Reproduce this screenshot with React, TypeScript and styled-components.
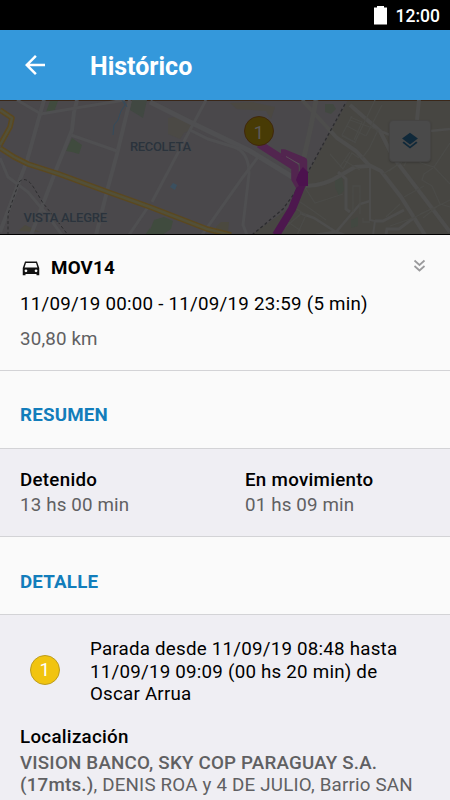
import React from 'react';
import styled, { createGlobalStyle } from 'styled-components';

const GlobalStyle = createGlobalStyle`
  * { box-sizing: border-box; }
  html, body { margin: 0; padding: 0; overflow: hidden; background: #fafafa; }
`;

const Screen = styled.div`
  width: 450px;
  height: 800px;
  overflow: hidden;
  display: flex;
  flex-direction: column;
  font-family: Roboto, "Liberation Sans", sans-serif;
  font-size: 18.75px;
  letter-spacing: 0.22px;
  color: #000;
  background: #fafafa;
`;

const StatusBar = styled.div`
  flex: 0 0 30px;
  display: flex;
  justify-content: flex-end;
  align-items: center;
  gap: 9px;
  padding: 2px 10px 0 0;
  background: #000;
  color: #fff;
  font-size: 17.5px;
  font-weight: 500;
  letter-spacing: 0;
  line-height: 28px;
`;

const BatteryIcon = styled.svg`
  margin-top: -2px;
`;

const AppBar = styled.header`
  flex: 0 0 70px;
  display: flex;
  align-items: center;
  gap: 40px;
  padding: 0 20px;
  background: #3498db;
  color: #fff;
`;

const BackIcon = styled.svg`
  width: 30px;
  height: 30px;
`;

const Title = styled.h1`
  margin: 3px 0 0;
  font-size: 25px;
  font-weight: 700;
  letter-spacing: 0;
  line-height: 30px;
`;

const MapArea = styled.div`
  flex: 0 0 135px;
  position: relative;
  background: #474642;
  border-bottom: 1px solid #000;
  overflow: hidden;
`;

const MapDrawing = styled.svg`
  display: block;
`;

const LayersButton = styled.button`
  position: absolute;
  left: 389px;
  top: 20px;
  width: 42px;
  height: 42px;
  padding: 0;
  display: grid;
  place-items: center;
  border: 1px solid #454443;
  border-radius: 4px;
  background: #4a4a4a;
  box-shadow: 0 1px 2px rgba(0, 0, 0, 0.18);
`;

const Summary = styled.section`
  flex: 0 0 136px;
  padding: 22px 20px 0;
  border-bottom: 1px solid #d3d3d6;
`;

const VehicleRow = styled.div`
  display: flex;
  align-items: center;
  height: 22px;
`;

const CarIcon = styled.svg`
  width: 22px;
  height: 22px;
  margin-right: 9px;
`;

const VehicleName = styled.span`
  font-weight: 700;
  line-height: 22px;
`;

const Chevrons = styled.svg`
  margin: -6px 4px 0 auto;
`;

const Period = styled.div`
  margin-top: 13px;
  letter-spacing: 0.235px;
  line-height: 24px;
`;

const Muted = styled.div<{ $top?: number }>`
  margin-top: ${(p) => p.$top ?? 0}px;
  color: #606062;
  letter-spacing: 0.15px;
  line-height: 24px;
`;

const SectionHeading = styled.h2<{ $top: number }>`
  flex: 0 0 78px;
  display: flex;
  align-items: center;
  margin: 0;
  padding: ${(p) => p.$top}px 20px 0;
  border-bottom: 1px solid #d3d3d6;
  color: #127dbb;
  font-size: 18.75px;
  font-weight: 700;
  letter-spacing: 0.18px;
`;

const Stats = styled.section`
  flex: 0 0 88px;
  display: grid;
  grid-template-columns: 1fr 1fr;
  padding-top: 19px;
  background: #efeef3;
  border-bottom: 1px solid #d3d3d6;
`;

const Stat = styled.div`
  padding-left: 20px;
`;

const Label = styled.div`
  font-weight: 500;
  letter-spacing: 0.28px;
  line-height: 25px;
`;

const Detail = styled.section`
  flex: 1 0 auto;
  padding: 23px 20px 0;
  background: #efeef3;
`;

const Stop = styled.div`
  display: flex;
  align-items: center;
  padding-left: 10px;
  gap: 30px;
`;

const StopBadge = styled.div`
  flex: 0 0 30px;
  height: 30px;
  border: 1px solid #bd9d1e;
  border-radius: 50%;
  display: grid;
  place-items: center;
  background: #f1c40f;
  color: #fff;
  line-height: 29px;
  margin-top: -3px;
`;

const StopText = styled.div`
  line-height: 22.5px;
`;

const Place = styled.div`
  margin-top: 19px;
`;

const Address = styled.p`
  margin: 2px 0 0;
  width: 430px;
  color: #606062;
  letter-spacing: 0.2px;
  line-height: 22.5px;
`;

const Strong = styled.strong`
  font-weight: 500;
`;

function CityMap() {
  return (
    <MapDrawing width="450" height="135" viewBox="0 0 450 135" fill="none">
      <path d="M0 0H348L302 84L292 106L251 135H0Z" fill="#4a484b" />
      <path d="M0 0H450" stroke="#3a2719" strokeWidth="2" />
      <g fill="#404b3e">
        <path d="M50 1h8l-4 11h-8z" />
        <path d="M72 38l10 7-3 9-7-2-6-1z" />
        <path d="M132 0h15l-4 18-13-8z" fill="#414842" />
        <path d="M150 130l4-10 10-3 9 4-2 8-9 6h-12z" />
        <path d="M145 135l5-7v7z" />
      </g>
      <g fill="#4b493f">
        <path d="M168 18l12-2 9 6 4 7-9 4-4 6-12-5z" opacity=".5" />
        <path d="M230 3l7 6 29 2 5 8 4-12-23-5z" opacity=".7" />
        <path d="M216 127l5-5h8l-1 9h-12z" />
        <path d="M18 131l7-6 15 7z" />
      </g>
      <g fill="#424841">
        <path d="M325 4h8l3 5-5 5-6-2z" />
        <path d="M335 78h7l2 12-5 6-4-9z" />
        <path d="M351 120l7-3v9l-7 2z" />
      </g>
      <path d="M170 87l3-4 4 2-2 5z" fill="#3b5060" />

      <g stroke="#4f4f51" strokeWidth="4">
        <path d="M44 0L40 14L27 61L0 132" />
        <path d="M77 0L74 12L72 30L56 70L31 135" />
        <path d="M130 0L117 54L107 91L96 135" />
        <path d="M17 0L41 14L76 8L125 0" strokeWidth="3" />
        <path d="M71 35L117 51" strokeWidth="3" />
        <path d="M0 58L8 77L28 92L48 116L62 135" strokeWidth="3" />
        <path d="M148 107L129 135" strokeWidth="3" />
        <path d="M150 2L194 24L250 51L294 78" strokeWidth="5" />
        <path d="M206 0L190 30L152 102" strokeWidth="3" />
        <path d="M190 30L208 39L234 47Q249 52 249 74L243 125L247 135" strokeWidth="3" />
        <path d="M258 57L243 77L202 135" strokeWidth="3" />
      </g>

      <g stroke="#4d4d4c" strokeWidth="4">
        <path d="M302 0L337 38L356 51L369 65L381 71L401 97L425 135" />
        <path d="M316 0L311 26L300 75" strokeWidth="5" />
        <path d="M306 86Q324 86 341 75L355 67L369 66" />
        <path d="M350 5L380 31L393 57L422 95L450 132" />
        <path d="M380 31L390 35L450 29" strokeWidth="2.5" />
        <path d="M300 113L314 118L336 132L360 104L370 101" strokeWidth="2.5" />
        <path d="M370 65L370 120L375 121L373 135" strokeWidth="2" />
        <path d="M336 132L316 135M336 132L344 135" strokeWidth="3" />
        <path d="M338 72L346 79L346 109L350 112" strokeWidth="3" />
        <path d="M375 121L383 121L404 110M386 135L387 129L399 129L415 117" strokeWidth="3" />
        <path d="M419 0L417 20" />
      </g>

      <g stroke="#4b4b48" strokeWidth="1.3">
        <path d="M352 16L342 35L355 42L375 0M350 17L362 22L354 40M347 26L366 36M350 20L367 26L378 30L369 49L362 58" />
        <path d="M366 36L382 5M342 36L356 43M340 67L350 52M345 61L360 70M330 54L343 69L352 53L359 58" />
        <path d="M353 112V86H360V114M363 118V122H370M300 102L312 110L326 120M300 80L315 103L343 94" />
        <path d="M383 74L402 62M389 71L397 65M404 66L412 50M412 55L421 63L434 67L450 43M434 67L450 84" />
        <path d="M433 68L424 74L422 80L432 86L440 104L450 107M440 105L420 114M404 97L424 86M400 104L386 117M423 118L439 105M390 126L413 118L450 100" />
        <path d="M287 124L295 108L306 115L297 135M282 130L302 113M288 122L301 131" />
      </g>

      <g strokeLinejoin="round">
        <path d="M0 10L12 18L10 27L0 45M0 48L14 57L28 64L59 74L108 92L150 107L207 129L231 135" stroke="#5b481f" strokeWidth="5.5" />
        <path d="M0 10L12 18L10 27L0 45M0 48L14 57L28 64L59 74L108 92L150 107L207 129L231 135" stroke="#535038" strokeWidth="2.5" />
      </g>
      <path d="M122 0l3 5-4 6-3 9-4 5-1 10M127 7l-3-6" stroke="#344b5c" strokeWidth="1" />
      <path d="M8 135V114L19 82Q26 75 34 88L43 103L55 118L68 135" stroke="#2c2c2e" strokeDasharray="3 2.500" />
      <path d="M252 135L283 109L302 83L345 4" stroke="#2c2c2f" strokeWidth="1.3" strokeDasharray="3 2.500" />

      <path d="M302 74V84L292 109L276 135" stroke="#4d174e" strokeWidth="8" strokeLinejoin="round" />
      <g stroke="#52254f" strokeWidth="7.500" strokeLinejoin="round">
        <path d="M259 44L295 67V79L299 86" />
        <path d="M281 53L284 53L303.500 61V86" />
      </g>
      <path d="M299 72L303 67L308 72V86H299L296 80Z" fill="#4c124e" />
      <path d="M286 56.500L299 64" stroke="#5c4d5a" strokeWidth="1" />

      <g
        fontFamily="Roboto, sans-serif"
        fontWeight="500"
        fill="#2b333c"
        stroke="#494a4d"
        strokeWidth="1.4"
        paintOrder="stroke"
        letterSpacing="0"
      >
        <text x="130" y="51" fontSize="13" textLength="61">RECOLETA</text>
        <text x="23.5" y="122" fontSize="13" textLength="83.5">VISTA ALEGRE</text>
      </g>
      <circle cx="259" cy="31" r="14.5" fill="#483b05" stroke="#41280c" />
      <text x="259" y="38.5" fontFamily="Roboto, sans-serif" fontSize="19" textAnchor="middle" fill="#5a5958">
        1
      </text>
    </MapDrawing>
  );
}

export default function App() {
  return (
    <>
      <GlobalStyle />
      <Screen>
        <StatusBar>
          <BatteryIcon width="13" height="19" viewBox="0 0 13 19">
            <path d="M0 1.500h3V0h7v1.500h3v17H0z" fill="#fff" />
          </BatteryIcon>
          <span>12:00</span>
        </StatusBar>
        <AppBar>
          <BackIcon viewBox="0 0 24 24" fill="#fff">
            <path d="M20 11H7.83l5.59-5.59L12 4l-8 8 8 8 1.41-1.41L7.83 13H20v-2z" />
          </BackIcon>
          <Title>Histórico</Title>
        </AppBar>
        <MapArea>
          <CityMap />
          <LayersButton aria-label="Capas">
            <svg width="20" height="20" viewBox="0 0 24 24" fill="#10293a">
              <path d="M12 17.5l-7.4-5.8L3 13l9 7 9-7-1.6-1.3z" transform="translate(0 1)" />
              <path d="M12 2L2.5 9 12 16.200l9.500-7.200z" />
            </svg>
          </LayersButton>
        </MapArea>
        <Summary>
          <VehicleRow>
            <CarIcon viewBox="0 0 24 24" fill="#111">
              <path
                fillRule="evenodd"
                d="M5.500 5h13l2.500 7v8h-3v-1.500H6V20H3v-8zM6.500 6.500L5 11.500h14l-1.500-5zM6.500 13.500a1.500 1.500 0 100 3 1.500 1.500 0 000-3zM17.500 13.500a1.500 1.500 0 100 3 1.500 1.500 0 000-3z"
              />
            </CarIcon>
            <VehicleName>MOV14</VehicleName>
            <Chevrons width="13" height="13" viewBox="0 0 13 13" fill="none" stroke="#9a9a9c" strokeWidth="1.7">
              <path d="M1.500 1.500l5 4.500 5-4.500M1.500 7l5 4.500 5-4.500" />
            </Chevrons>
          </VehicleRow>
          <Period>11/09/19 00:00 - 11/09/19 23:59 (5 min)</Period>
          <Muted $top={11}>30,80 km</Muted>
        </Summary>
        <SectionHeading $top={10}>RESUMEN</SectionHeading>
        <Stats>
          <Stat>
            <Label>Detenido</Label>
            <Muted>13 hs 00 min</Muted>
          </Stat>
          <Stat>
            <Label>En movimiento</Label>
            <Muted>01 hs 09 min</Muted>
          </Stat>
        </Stats>
        <SectionHeading $top={12}>DETALLE</SectionHeading>
        <Detail>
          <Stop>
            <StopBadge>1</StopBadge>
            <StopText>
              Parada desde 11/09/19 08:48 hasta
              <br />
              11/09/19 09:09 (00 hs 20 min) de
              <br />
              Oscar Arrua
            </StopText>
          </Stop>
          <Place>
            <Label>Localización</Label>
            <Address>
              <Strong>VISION BANCO, SKY COP PARAGUAY S.A.</Strong>
              <br />
              <Strong>(17mts.)</Strong>, DENIS ROA y 4 DE JULIO, Barrio SAN
            </Address>
          </Place>
        </Detail>
      </Screen>
    </>
  );
}
